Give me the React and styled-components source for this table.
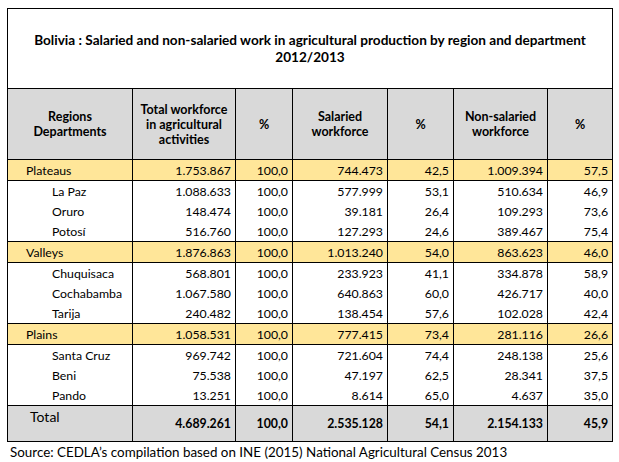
import React from 'react'
import styled, { createGlobalStyle } from 'styled-components'

const GlobalStyle = createGlobalStyle`
  html, body {
    margin: 0;
    padding: 0;
    background: #ffffff;
  }
  body {
    font-family: Lato, "Liberation Sans", sans-serif;
    color: #000000;
  }
`

const Page = styled.div`
  width: 619px;
  height: 462px;
  padding: 8px 0 0 7px;
  box-sizing: border-box;
  overflow: hidden;
`

const Table = styled.table`
  border-collapse: collapse;
  table-layout: fixed;
  width: 605px;
  font-size: 12.3px;
  border: 1px solid #000;
`

const TitleCell = styled.td`
  height: 79px;
  padding: 0 6px;
  text-align: center;
  font-weight: 700;
  font-size: 13.6px;
  line-height: 17px;
  border: 1px solid #000;
`

const HeadCell = styled.th`
  height: 70px;
  background: #d9d9d9;
  font-weight: 700;
  font-size: 12.5px;
  line-height: 15px;
  text-align: center;
  border: 1px solid #000;
  padding: 0 3px;
`

const Cell = styled.td`
  height: 20px;
  padding: 0 ${p => (p.$label ? 0 : 4)}px 0 ${p => (p.$label ? (p.$region ? 18 : 44) : 0)}px;
  text-align: ${p => (p.$label ? 'left' : 'right')};
  background: ${p => (p.$region ? '#ffe699' : '#ffffff')};
  border-left: 1px solid #000;
  border-right: 1px solid #000;
  border-top: ${p => (p.$region ? '1px solid #000' : 'none')};
  border-bottom: ${p => (p.$region ? '1px solid #000' : 'none')};
  white-space: nowrap;
  line-height: 19px;
`

const TotalCell = styled.td`
  height: 33px;
  background: #d9d9d9;
  border: 1px solid #000;
  font-weight: ${p => (p.$label ? 400 : 700)};
  font-size: ${p => (p.$label ? '14px' : '12.3px')};
  text-align: ${p => (p.$label ? 'left' : 'right')};
  vertical-align: ${p => (p.$label ? 'top' : 'middle')};
  padding: ${p => (p.$label ? '2px 0 0 22px' : '0 4px 0 0')};
`

const Source = styled.p`
  margin: 2px 0 0 3px;
  font-size: 13.4px;
  line-height: 17px;
`

const widths = [125, 103, 57, 95, 66, 94, 65]

const rows = [
  { name: 'Plateaus', region: true, v: ['1.753.867', '100,0', '744.473', '42,5', '1.009.394', '57,5'] },
  { name: 'La Paz', v: ['1.088.633', '100,0', '577.999', '53,1', '510.634', '46,9'] },
  { name: 'Oruro', v: ['148.474', '100,0', '39.181', '26,4', '109.293', '73,6'] },
  { name: 'Potosí', v: ['516.760', '100,0', '127.293', '24,6', '389.467', '75,4'] },
  { name: 'Valleys', region: true, v: ['1.876.863', '100,0', '1.013.240', '54,0', '863.623', '46,0'] },
  { name: 'Chuquisaca', v: ['568.801', '100,0', '233.923', '41,1', '334.878', '58,9'] },
  { name: 'Cochabamba', v: ['1.067.580', '100,0', '640.863', '60,0', '426.717', '40,0'] },
  { name: 'Tarija', v: ['240.482', '100,0', '138.454', '57,6', '102.028', '42,4'] },
  { name: 'Plains', region: true, v: ['1.058.531', '100,0', '777.415', '73,4', '281.116', '26,6'] },
  { name: 'Santa Cruz', v: ['969.742', '100,0', '721.604', '74,4', '248.138', '25,6'] },
  { name: 'Beni', v: ['75.538', '100,0', '47.197', '62,5', '28.341', '37,5'] },
  { name: 'Pando', v: ['13.251', '100,0', '8.614', '65,0', '4.637', '35,0'] },
]

const total = ['4.689.261', '100,0', '2.535.128', '54,1', '2.154.133', '45,9']

export default function App() {
  return (
    <Page>
      <GlobalStyle />
      <Table>
        <colgroup>
          {widths.map((w, i) => <col key={i} style={{ width: w }} />)}
        </colgroup>
        <tbody>
          <tr>
            <TitleCell colSpan={7}>
              Bolivia : Salaried and non-salaried work in agricultural production by region and department
              <br />
              2012/2013
            </TitleCell>
          </tr>
          <tr>
            <HeadCell>Regions<br />Departments</HeadCell>
            <HeadCell>Total workforce in agricultural activities</HeadCell>
            <HeadCell>%</HeadCell>
            <HeadCell>Salaried workforce</HeadCell>
            <HeadCell>%</HeadCell>
            <HeadCell>Non-salaried workforce</HeadCell>
            <HeadCell>%</HeadCell>
          </tr>
          {rows.map(r => (
            <tr key={r.name}>
              <Cell $label $region={r.region}>{r.name}</Cell>
              {r.v.map((x, i) => <Cell key={i} $region={r.region}>{x}</Cell>)}
            </tr>
          ))}
          <tr>
            <TotalCell $label>Total</TotalCell>
            {total.map((x, i) => <TotalCell key={i}>{x}</TotalCell>)}
          </tr>
        </tbody>
      </Table>
      <Source>Source: CEDLA’s compilation based on INE (2015) National Agricultural Census 2013</Source>
    </Page>
  )
}
